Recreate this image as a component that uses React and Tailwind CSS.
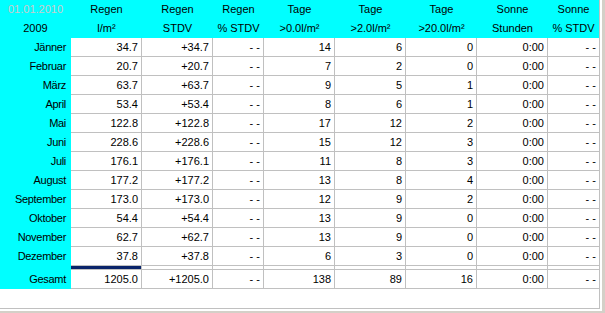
const months = [
  ["Jänner", "34.7", "+34.7", "14", "6", "0"],
  ["Februar", "20.7", "+20.7", "7", "2", "0"],
  ["März", "63.7", "+63.7", "9", "5", "1"],
  ["April", "53.4", "+53.4", "8", "6", "1"],
  ["Mai", "122.8", "+122.8", "17", "12", "2"],
  ["Juni", "228.6", "+228.6", "15", "12", "3"],
  ["Juli", "176.1", "+176.1", "11", "8", "3"],
  ["August", "177.2", "+177.2", "13", "8", "4"],
  ["September", "173.0", "+173.0", "12", "9", "2"],
  ["Oktober", "54.4", "+54.4", "13", "9", "0"],
  ["November", "62.7", "+62.7", "13", "9", "0"],
  ["Dezember", "37.8", "+37.8", "6", "3", "0"],
];

const headers = [
  ["Regen", "l/m²"],
  ["Regen", "STDV"],
  ["Regen", "% STDV"],
  ["Tage", ">0.0l/m²"],
  ["Tage", ">2.0l/m²"],
  ["Tage", ">20.0l/m²"],
  ["Sonne", "Stunden"],
  ["Sonne", "% STDV"],
];

const cols = "grid grid-cols-[71px_71px_71px_51px_71px_71px_71px_71px_1fr]";

function Row({ label, values }) {
  return (
    <div className={`${cols} h-[19px]`}>
      <div className="bg-[#00ffff] flex items-center justify-end pr-[5px] tracking-[-0.3px]">
        {label}
      </div>
      {values.map((v, i) => (
        <div
          key={i}
          className={`bg-white flex items-center justify-end pr-[3px] border-b border-[#c0c0c0] ${
            i < values.length - 1 ? "border-r" : ""
          }`}
        >
          {v}
        </div>
      ))}
    </div>
  );
}

export default function App() {
  return (
    <div className="w-[605px] h-[313px] bg-[#d4d0c8] pr-[3px] pb-[2px] font-['Liberation_Sans',Arial,sans-serif] text-[11px] leading-none text-black">
      <div className="h-full bg-white pr-[2px] pb-[2px]">
        <div className="h-full bg-white border-r border-b border-[#c0c0c0]">
          {/* header */}
          <div className={`${cols} h-[19px] bg-[#00ffff]`}>
            <div className="flex items-center justify-center text-[#c8cccc]">
              01.01.2010
            </div>
            {headers.map((h, i) => (
              <div key={i} className="flex items-center justify-center">
                {h[0]}
              </div>
            ))}
          </div>
          <div className={`${cols} h-[19px] bg-[#00ffff]`}>
            <div className="flex items-center justify-center">2009</div>
            {headers.map((h, i) => (
              <div key={i} className="flex items-center justify-center">
                {h[1]}
              </div>
            ))}
          </div>

          {months.map((m) => (
            <Row
              key={m[0]}
              label={m[0]}
              values={[m[1], m[2], "- -", m[3], m[4], m[5], "0:00", "- -"]}
            />
          ))}

          {/* selection bar / spacer */}
          <div className={`${cols} h-[4px]`}>
            <div className="bg-[#00ffff]" />
            <div className="bg-[#0a246a] border-b border-r border-[#c0c0c0]" />
            <div className="bg-white border-b border-r border-[#c0c0c0]" />
            <div className="bg-white border-b border-r border-[#c0c0c0]" />
            <div className="bg-white border-b border-r border-[#c0c0c0]" />
            <div className="bg-white border-b border-r border-[#c0c0c0]" />
            <div className="bg-white border-b border-r border-[#c0c0c0]" />
            <div className="bg-white border-b border-r border-[#c0c0c0]" />
            <div className="bg-white border-b border-[#c0c0c0]" />
          </div>

          <Row
            label="Gesamt"
            values={["1205.0", "+1205.0", "- -", "138", "89", "16", "0:00", "- -"]}
          />
        </div>
      </div>
    </div>
  );
}
